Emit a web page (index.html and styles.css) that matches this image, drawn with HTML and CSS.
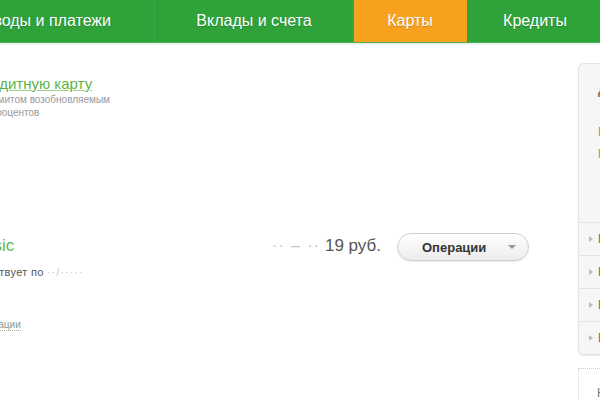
FILE: index.html
```html
<!DOCTYPE html>
<html>
<head>
    <meta charset="utf-8">
    <title>Карты</title>
    <link rel="stylesheet" href="styles.css">
</head>
<body>

<div class="page">

    <nav class="top-menu">
        <a class="tab tab-payments" href="#">Переводы и платежи</a>
        <a class="tab tab-deposits" href="#">Вклады и счета</a>
        <a class="tab tab-cards active" href="#">Карты</a>
        <a class="tab tab-credits" href="#">Кредиты</a>
    </nav>

    <div class="content">

        <main class="cards">

            <section class="offer">
                <a class="offer-link" href="#">Оформить кредитную карту</a>
                <p class="offer-note">Кредитная карта с лимитом возобновляемым<br>до 50 дней — и без процентов</p>
            </section>

            <section class="card-row">
                <div class="card-info">
                    <a class="card-name" href="#">Visa Classic</a>
                    <p class="card-status">Карточка действует по <span class="mask">··/·····</span></p>
                    <a class="card-history" href="#">Последние операции</a>
                </div>
                <div class="card-balance">
                    <span class="mask">·· – ··</span> 19 руб.
                </div>
                <button class="ops-button">
                    Операции
                    <span class="caret"></span>
                </button>
            </section>

        </main>

        <aside class="side">
            <div class="side-panel">
                <div class="side-head">
                    <h3>Действия</h3>
                    <a href="#">Блокировка</a>
                    <a href="#">Перевыпуск</a>
                </div>
                <ul class="side-list">
                    <li>Перевод</li>
                    <li>Пополнение</li>
                    <li>Платежи</li>
                    <li>Выписка</li>
                </ul>
            </div>
            <div class="side-box">Новости</div>
        </aside>

    </div>

</div>

</body>
</html>
```

FILE: styles.css
```css
/* Base */

html, body {
    margin: 0;
    padding: 0;
    overflow: hidden;
    background: #fff;
}

body {
    font-family: "Liberation Sans", Arial, sans-serif;
    color: #333;
}

a {
    text-decoration: none;
}

p {
    margin: 0;
}

/* the screenshot shows only the middle of a wider page */
.page {
    width: 960px;
    margin-left: -110px;
}

/* Top menu */

.top-menu {
    display: flex;
    height: 42px;
    background: #2fa33a;
    border-bottom: 1px solid #48b650;
    box-shadow: 0 1px 2px rgba(0, 0, 0, 0.12);
}

.tab {
    display: flex;
    justify-content: center;
    align-items: center;
    color: #fff;
    font-size: 16px;
    text-shadow: 0 1px 1px rgba(0, 0, 0, 0.2);
    border-right: 1px solid #3aa944;
    box-sizing: border-box;
}

.tab-payments {
    width: 265px;
    justify-content: flex-end;
    padding-right: 43px;
}
.tab-deposits { width: 199px; }
.tab-cards    { width: 113px; }
.tab-credits  { width: 136px; border-right: none; }

.tab.active {
    background: #f7a21f;
    border-right-color: #f7a21f;
}

/* Content */

.content {
    display: flex;
}

.cards {
    flex: 0 0 660px;
    padding-left: 8px;
    box-sizing: border-box;
}

.offer {
    padding-top: 32px;
    height: 150px;
}

.offer-link {
    color: #5db446;
    font-size: 15px;
    text-decoration: underline;
    text-decoration-color: #9ad18a;
}

.offer-note {
    font-size: 10px;
    line-height: 13px;
    color: #9a9a9a;
}

.card-row {
    display: flex;
    align-items: flex-start;
    padding-top: 10px;
}

.card-info {
    flex: 0 0 363px;
    padding-left: 24px;
    box-sizing: border-box;
}

.card-name {
    display: block;
    color: #62b84a;
    font-size: 17px;
    line-height: 22px;
}

.card-status {
    margin-top: 9px;
    font-size: 11px;
    letter-spacing: 0.3px;
    color: #555;
}

.mask {
    color: #c8c8c8;
    letter-spacing: 1px;
}

.card-history {
    display: inline-block;
    margin-top: 41px;
    font-size: 10px;
    color: #8a9c8a;
    border-bottom: 1px dotted #9fb09f;
}

.card-balance {
    flex: 0 0 120px;
    text-align: right;
    font-size: 17px;
    line-height: 22px;
    color: #555;
}

.ops-button {
    display: flex;
    flex: 0 0 132px;
    align-items: center;
    justify-content: space-between;
    margin: -2px 0 0 16px;
    height: 28px;
    padding: 0 12px 0 24px;
    border: 1px solid #cfcfcf;
    border-radius: 14px;
    background: linear-gradient(#ffffff, #ececec);
    box-shadow: 0 1px 1px rgba(0, 0, 0, 0.08);
    font-family: "Liberation Sans", Arial, sans-serif;
    font-size: 13px;
    font-weight: bold;
    color: #333;
}

.caret {
    width: 0;
    height: 0;
    border-left: 4px solid transparent;
    border-right: 4px solid transparent;
    border-top: 4px solid #999;
}

/* Side panel */

.side {
    padding-top: 20px;
    padding-left: 28px;
}

.side-panel {
    width: 170px;
    background: #f6f6f6;
    border: 1px solid #e2e2e2;
    border-radius: 6px;
    box-shadow: 0 1px 2px rgba(0, 0, 0, 0.08);
}

.side-head {
    height: 158px;
    padding: 18px 0 0 19px;
    box-sizing: border-box;
}

.side-head h3 {
    margin: 0 0 28px;
    font-size: 13px;
    color: #8b6a3a;
}

.side-head a {
    display: block;
    margin-bottom: 8px;
    font-size: 12px;
    color: #8aa35a;
}

.side-list {
    list-style: none;
    margin: 0;
    padding: 0;
}

.side-list li {
    height: 32px;
    line-height: 32px;
    border-top: 1px solid #e4e4e4;
    padding-left: 19px;
    font-size: 12px;
    color: #8b6a3a;
    position: relative;
}

.side-list li::before {
    content: "";
    position: absolute;
    left: 10px;
    top: 13px;
    border-top: 3px solid transparent;
    border-bottom: 3px solid transparent;
    border-left: 4px solid #bbb;
}

.side-box {
    margin-top: 13px;
    height: 60px;
    padding: 17px 0 0 18px;
    border: 1px dotted #ccc;
    font-size: 12px;
    color: #777;
}
```
